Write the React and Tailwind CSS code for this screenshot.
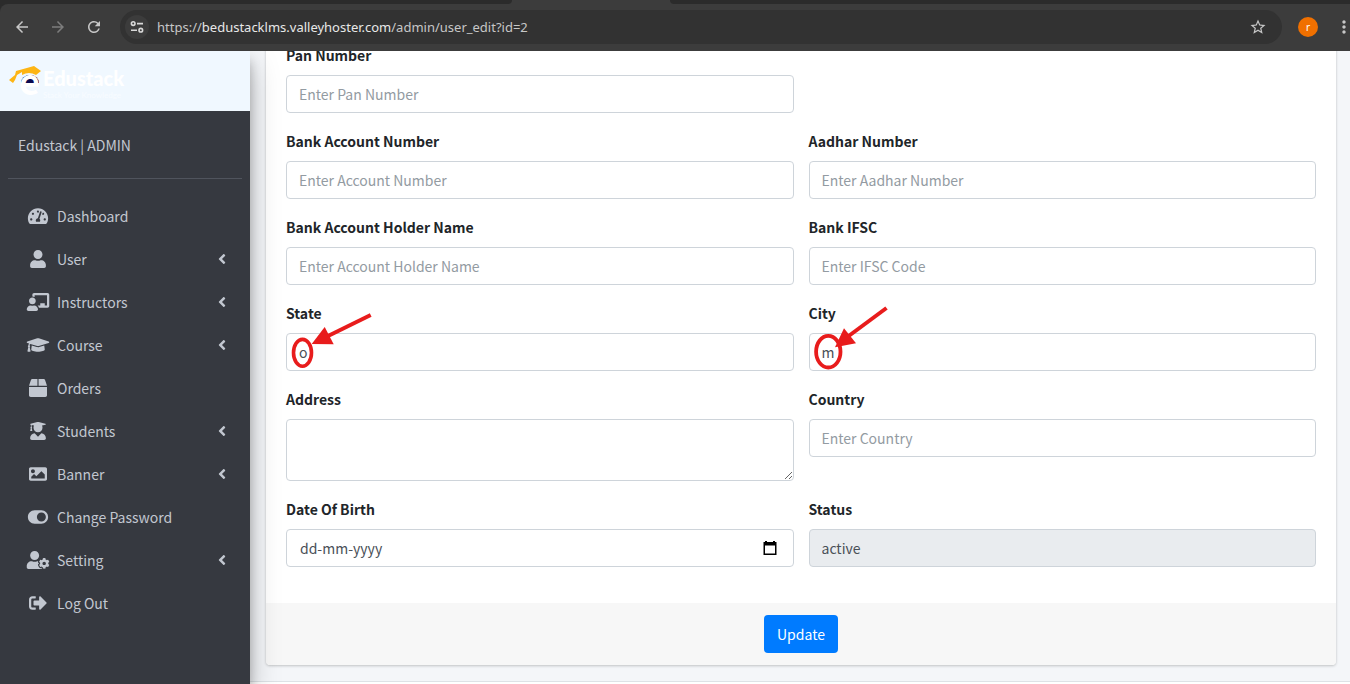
import React from "react";
import {
  FaAngleLeft,
  FaBox,
  FaChalkboardTeacher,
  FaGraduationCap,
  FaImage,
  FaSignOutAlt,
  FaTachometerAlt,
  FaToggleOn,
  FaUser,
  FaUserCog,
  FaUserGraduate,
} from "react-icons/fa";
import {
  MdArrowBack,
  MdArrowForward,
  MdMoreVert,
  MdRefresh,
  MdStarBorder,
} from "react-icons/md";

const menu = [
  { label: "Dashboard", icon: FaTachometerAlt },
  { label: "User", icon: FaUser, children: true },
  { label: "Instructors", icon: FaChalkboardTeacher, children: true },
  { label: "Course", icon: FaGraduationCap, children: true },
  { label: "Orders", icon: FaBox },
  { label: "Students", icon: FaUserGraduate, children: true },
  { label: "Banner", icon: FaImage, children: true },
  { label: "Change Password", icon: FaToggleOn },
  { label: "Setting", icon: FaUserCog, children: true },
  { label: "Log Out", icon: FaSignOutAlt },
];

const control =
  "block w-full rounded border border-[#ced4da] bg-white px-3 text-[14px] leading-6 text-[#495057] placeholder:text-[#939ba2] outline-none";

function BrowserBar() {
  return (
    <header className="relative z-20 bg-[#2b2b2b] font-['Noto_Sans',sans-serif]">
      <div className="flex h-1 bg-[#3c3c3c]">
        <div className="w-[512px] rounded-br-lg bg-[#2b2b2b]" />
        <div className="w-[158px]" />
        <div className="flex-1 rounded-bl-lg bg-[#2b2b2b]" />
      </div>
      <div className="bg-[#2b2b2b]">
        <div className="flex h-[47px] items-center rounded-tl-lg bg-[#3c3c3c] pb-px pl-[13px] text-[#c7c7c7]">
          <button aria-label="Back">
            <MdArrowBack className="size-[18px]" />
          </button>
          <button aria-label="Forward" className="ml-[18px] text-[#7d7d7d]">
            <MdArrowForward className="size-[18px]" />
          </button>
          <button aria-label="Reload" className="ml-[18px]">
            <MdRefresh className="size-[18px]" />
          </button>
          <div className="ml-[17px] flex h-[34px] flex-1 items-center rounded-full bg-[#323232] pr-[15px] pl-[5px]">
            <button
              aria-label="Site information"
              className="flex size-6 items-center justify-center rounded-full bg-[#3c3c3c]"
            >
              <svg
                viewBox="0 0 14 14"
                className="size-[14px]"
                fill="none"
                stroke="#d8d8d8"
                strokeWidth="1.6"
              >
                <circle cx="3.2" cy="3.6" r="1.8" />
                <path d="M7 3.600h6M1 10.200h6" />
                <circle cx="10.8" cy="10.2" r="1.8" />
              </svg>
            </button>
            <span className="ml-2 flex-1 text-[13px] leading-5">
              https://
              <span className="text-[#e8e8e8]">bedustacklms.valleyhoster.com</span>
              /admin/user_edit?id=2
            </span>
            <button aria-label="Bookmark">
              <MdStarBorder className="size-[18px]" />
            </button>
          </div>
          <button
            aria-label="Profile"
            className="ml-4 flex size-5 items-center justify-center rounded-full bg-[#f07000] text-[10px] text-white"
          >
            r
          </button>
          <button aria-label="Menu" className="-mr-1 ml-4">
            <MdMoreVert className="size-5" />
          </button>
        </div>
      </div>
    </header>
  );
}

function Logo() {
  return (
    <a href="#" className="flex h-[60px] items-center bg-[#f0f8ff] pl-[9px]">
      <svg viewBox="0 0 34 34" className="size-[34px] overflow-visible">
        <path d="M12 19a9 8 0 0 1 18 0z" fill="#0a0a50" />
        <text
          x="10"
          y="31"
          fontSize="36"
          fontWeight="700"
          fill="#fff"
          fontFamily="'Noto Sans CJK JP', sans-serif"
        >
          e
        </text>
        <path
          d="M7 7 25 2l7 5-5 4q-7-4-14 0v-3l-5 3-2 5-2 3-4-3 6-5z"
          fill="#fdb515"
        />
      </svg>
      <span className="flex flex-col pt-1 font-['Lato',sans-serif] text-white">
        <span className="text-[20px] leading-6 font-black">Edustack</span>
        <span className="text-[8px] leading-[10px] text-[#f8fcff]">Stack Your Knowledge</span>
      </span>
    </a>
  );
}

function Sidebar() {
  return (
    <aside className="relative z-10 w-[250px] shrink-0 bg-[#363940] text-[#c2c7d0] shadow-[0_14px_28px_rgba(0,0,0,0.25),0_10px_10px_rgba(0,0,0,0.22)]">
      <Logo />
      <div className="px-2">
        <div className="flex h-[68px] items-center border-b border-[#50545d] pl-[10px]">
          <a href="#">Edustack | ADMIN</a>
        </div>
        <nav className="mt-[17px] flex flex-col gap-[3px]">
          {menu.map(({ label, icon: Icon, children }) => (
            <a key={label} href="#" className="flex h-10 items-center pr-3 pl-4">
              <span className="flex w-7 justify-center pb-px">
                <Icon className="h-[18px] w-6" />
              </span>
              <span className="ml-[5px] flex-1">{label}</span>
              {children && <FaAngleLeft className="mb-px size-4" />}
            </a>
          ))}
        </nav>
      </div>
    </aside>
  );
}

function Field({ id, label, children }) {
  return (
    <div className="pb-4">
      <label htmlFor={id} className="mb-2 block font-bold text-[#212529]">
        {label}
      </label>
      {children}
    </div>
  );
}

function TextField({ id, label, mark, ...props }) {
  return (
    <Field id={id} label={label}>
      <div className="relative">
        <input
          id={id}
          type="text"
          className={`${control} h-[38px] read-only:bg-[#e9ecef]`}
          {...props}
        />
        {mark}
      </div>
    </Field>
  );
}

function StateMark() {
  return (
    <svg
      viewBox="0 0 96 68"
      className="pointer-events-none absolute -top-7 left-0 h-[68px] w-24"
      fill="none"
      stroke="#e81c1c"
    >
      <ellipse cx="16.5" cy="47.8" rx="9" ry="13.4" strokeWidth="3.6" />
      <path d="M42 31 84.700 10" strokeWidth="4" />
      <path d="M25.700 39 38.700 22 47.700 39.300z" fill="#e81c1c" stroke="none" />
    </svg>
  );
}

function CityMark() {
  return (
    <svg
      viewBox="0 0 96 68"
      className="pointer-events-none absolute -top-7 left-0 h-[68px] w-24"
      fill="none"
      stroke="#e81c1c"
    >
      <ellipse cx="19.3" cy="46.7" rx="12.2" ry="15.8" strokeWidth="3.8" />
      <path d="M39 31.500 77.500 3" strokeWidth="4" />
      <path d="M26 42.300 35 23.300 47 38.300z" fill="#e81c1c" stroke="none" />
    </svg>
  );
}

function UserForm() {
  return (
    <form className="rounded-b bg-white shadow-[0_0_1px_rgba(0,0,0,0.13),0_1px_3px_rgba(0,0,0,0.2)]">
      <div className="-mt-2 px-5 pb-5">
        <div className="grid grid-cols-2 gap-x-[15px]">
          <TextField id="pan" label="Pan Number" placeholder="Enter Pan Number" />
          <div />
          <TextField id="account" label="Bank Account Number" placeholder="Enter Account Number" />
          <TextField id="aadhar" label="Aadhar Number" placeholder="Enter Aadhar Number" />
          <TextField id="holder" label="Bank Account Holder Name" placeholder="Enter Account Holder Name" />
          <TextField id="ifsc" label="Bank IFSC" placeholder="Enter IFSC Code" />
          <TextField id="state" label="State" defaultValue="o" mark={<StateMark />} />
          <TextField id="city" label="City" defaultValue="m" mark={<CityMark />} />
          <Field id="address" label="Address">
            <textarea id="address" className={`${control} h-[62px] resize-y py-[6px]`} />
          </Field>
          <TextField id="country" label="Country" placeholder="Enter Country" />
          <Field id="dob" label="Date Of Birth">
            <div className="flex h-[38px] items-center rounded border border-[#ced4da] bg-white pr-[15px] pl-[13px]">
              <input
                id="dob"
                type="text"
                placeholder="dd-mm-yyyy"
                className="min-w-0 flex-1 leading-6 outline-none placeholder:text-[#495057]"
              />
              <button type="button" aria-label="Choose date">
                <svg viewBox="0 0 16 16" className="size-4">
                  <path
                    d="M3 1h2v1h6V1h2v1h1.500v13h-13V2H3zM3 5.500v8h10v-8z"
                    fill="#000"
                    fillRule="evenodd"
                  />
                </svg>
              </button>
            </div>
          </Field>
          <TextField id="status" label="Status" defaultValue="active" readOnly />
        </div>
      </div>
      <div className="flex justify-center rounded-b bg-[#f7f7f7] p-3">
        <button
          type="button"
          className="h-[38px] rounded bg-[#007bff] px-[13px] leading-6 text-white"
        >
          Update
        </button>
      </div>
    </form>
  );
}

export default function App() {
  return (
    <div className="flex min-h-screen flex-col font-['Noto_Sans_CJK_JP',sans-serif] text-[14px] leading-6">
      <BrowserBar />
      <div className="flex flex-1">
        <Sidebar />
        <div className="flex min-w-0 flex-1 flex-col overflow-hidden bg-[#f4f6f9]">
          <main className="pr-[14px] pb-4 pl-4">
            <UserForm />
          </main>
          <footer className="flex-1 border-t border-[#dee2e6] bg-white" />
        </div>
      </div>
    </div>
  );
}
